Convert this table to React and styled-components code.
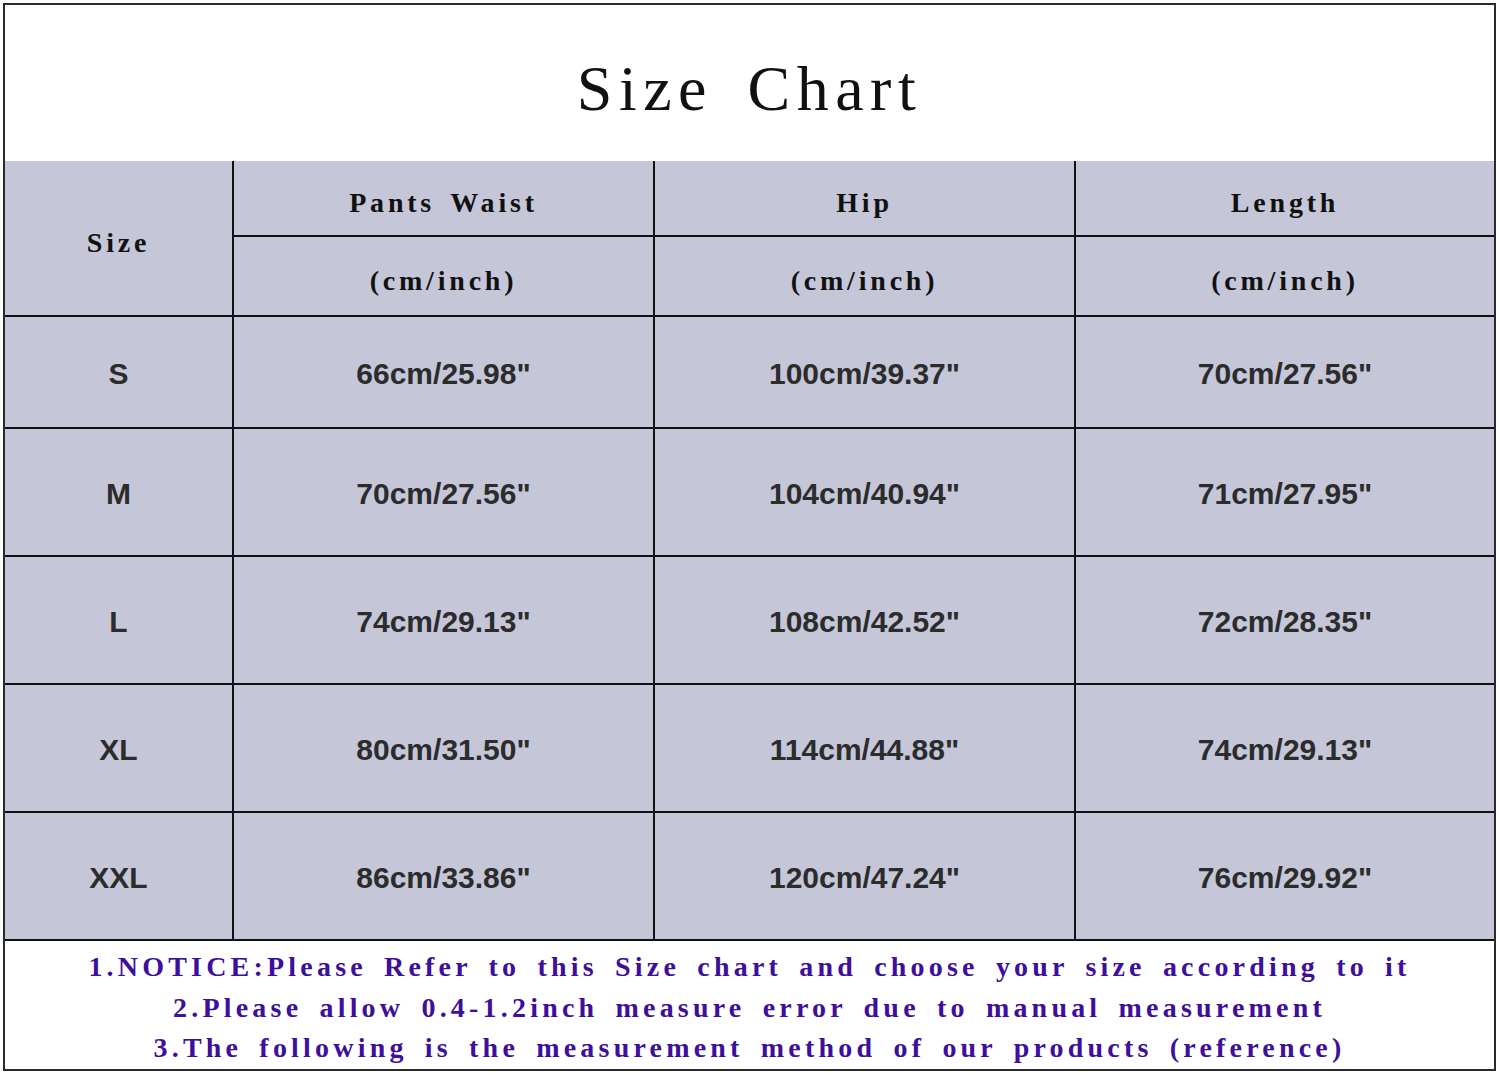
import React from "react";
import styled, { createGlobalStyle } from "styled-components";

const GlobalStyle = createGlobalStyle`
  html, body {
    margin: 0;
    padding: 0;
    background: #ffffff;
  }
  body {
    font-family: "Liberation Serif", "Times New Roman", serif;
  }
`;

const Page = styled.div`
  width: 1500px;
  height: 1075px;
  padding: 3px 4px 4px 3px;
  box-sizing: border-box;
  background: #ffffff;
`;

const Frame = styled.div`
  height: 100%;
  border: 2px solid #2a2a2a;
  box-sizing: border-box;
  display: flex;
  flex-direction: column;
`;

const TitleBar = styled.div`
  height: 156px;
  display: flex;
  align-items: center;
  justify-content: center;
  font-family: "Liberation Serif", "Times New Roman", serif;
  font-size: 64px;
  letter-spacing: 6.5px;
  word-spacing: 12px;
  color: #111111;
  padding-top: 12px;
  box-sizing: border-box;
`;

const Table = styled.table`
  width: 100%;
  border-collapse: collapse;
  table-layout: fixed;
  background: #c6c6d9;
`;

const Row = styled.tr`
  height: ${(p) => p.$h}px;
`;

const Cell = styled.td`
  border: 2px solid #121212;
  text-align: center;
  vertical-align: middle;
  padding: ${(p) => (p.$head ? "9px 0 0" : "3px 0 0")};
  color: ${(p) => (p.$head ? "#111111" : "#2c2c2c")};
  font-family: ${(p) =>
    p.$head
      ? `"Liberation Serif", "Times New Roman", serif`
      : `"Liberation Sans", Arial, sans-serif`};
  font-weight: bold;
  font-size: ${(p) => (p.$head ? "28px" : "30px")};
  letter-spacing: ${(p) => (p.$head ? "3.8px" : "0")};
  word-spacing: ${(p) => (p.$head ? "5px" : "0")};
  &:first-child {
    border-left: none;
  }
  &:last-child {
    border-right: none;
  }
`;

const Notes = styled.div`
  flex: 1;
  display: flex;
  flex-direction: column;
  align-items: center;
  padding-top: 6px;
  font-family: "Liberation Serif", "Times New Roman", serif;
  font-weight: bold;
  font-size: 28px;
  line-height: 40.5px;
  letter-spacing: 4.2px;
  word-spacing: 6px;
  color: #3d0f9c;
  white-space: pre;
`;

const sizes = [
  { size: "S", waist: '66cm/25.98"', hip: '100cm/39.37"', length: '70cm/27.56"', h: 112 },
  { size: "M", waist: '70cm/27.56"', hip: '104cm/40.94"', length: '71cm/27.95"', h: 128 },
  { size: "L", waist: '74cm/29.13"', hip: '108cm/42.52"', length: '72cm/28.35"', h: 128 },
  { size: "XL", waist: '80cm/31.50"', hip: '114cm/44.88"', length: '74cm/29.13"', h: 128 },
  { size: "XXL", waist: '86cm/33.86"', hip: '120cm/47.24"', length: '76cm/29.92"', h: 128 },
];

const notes = [
  "1.NOTICE:Please Refer to this Size chart and choose your size according to it",
  "2.Please allow 0.4-1.2inch measure error due to manual measurement",
  "3.The following is the measurement method of our products (reference)",
];

export default function App() {
  return (
    <>
      <GlobalStyle />
      <Page>
        <Frame>
          <TitleBar>Size Chart</TitleBar>
          <Table>
            <colgroup>
              <col style={{ width: 228 }} />
              <col style={{ width: 421 }} />
              <col style={{ width: 421 }} />
              <col />
            </colgroup>
            <tbody>
              <Row $h={75}>
                <Cell $head rowSpan={2} style={{ borderTop: "none" }}>
                  Size
                </Cell>
                <Cell $head style={{ borderTop: "none" }}>Pants Waist</Cell>
                <Cell $head style={{ borderTop: "none" }}>Hip</Cell>
                <Cell $head style={{ borderTop: "none" }}>Length</Cell>
              </Row>
              <Row $h={80}>
                <Cell $head>(cm/inch)</Cell>
                <Cell $head>(cm/inch)</Cell>
                <Cell $head>(cm/inch)</Cell>
              </Row>
              {sizes.map((s) => (
                <Row key={s.size} $h={s.h}>
                  <Cell>{s.size}</Cell>
                  <Cell>{s.waist}</Cell>
                  <Cell>{s.hip}</Cell>
                  <Cell>{s.length}</Cell>
                </Row>
              ))}
            </tbody>
          </Table>
          <Notes>
            {notes.map((n) => (
              <div key={n}>{n}</div>
            ))}
          </Notes>
        </Frame>
      </Page>
    </>
  );
}
